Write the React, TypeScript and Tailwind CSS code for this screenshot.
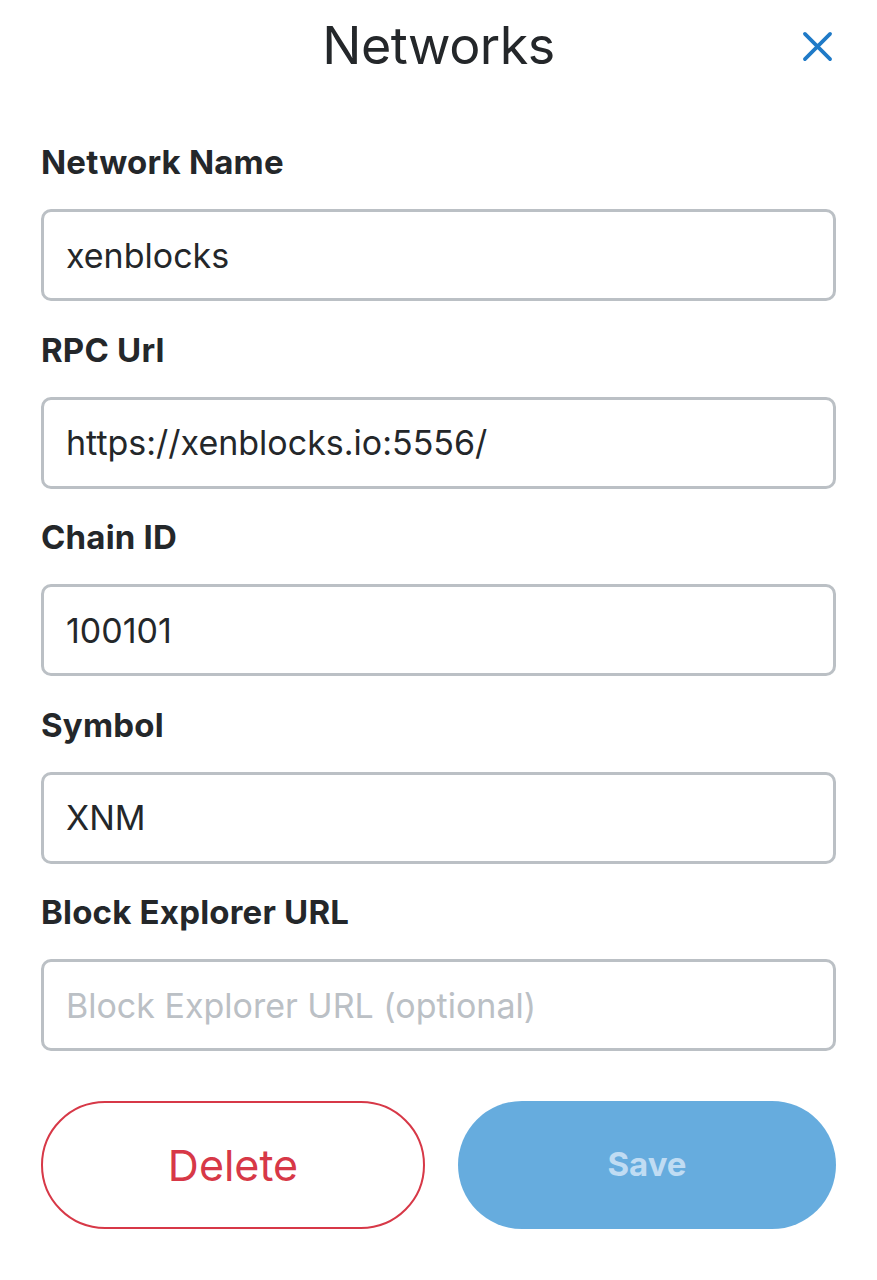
import React from 'react';

const fields = [
	{ label: 'Network Name', value: 'xenblocks' },
	{ label: 'RPC Url', value: 'https://xenblocks.io:5556/' },
	{ label: 'Chain ID', value: '100101' },
	{ label: 'Symbol', value: 'XNM' },
	{ label: 'Block Explorer URL', value: '', placeholder: 'Block Explorer URL (optional)' }
];

const App: React.FC = () => {
	return (
		<div className="w-[877px] h-[1280px] bg-white text-[#24272a]" style={{ fontFamily: 'Inter, "Open Sans", sans-serif' }}>
			<div className="relative h-[95px] flex justify-center pt-[20px]">
				<h1 className="text-[52px] leading-none font-normal tracking-[-0.5px]">Networks</h1>
				<button className="absolute right-[44px] top-[31px] text-[#1f7ac7]">
					<svg width="31" height="31" viewBox="0 0 32 32" fill="none" stroke="currentColor" strokeWidth="3.8" strokeLinecap="round">
						<path d="M3 3 L29 29 M29 3 L3 29" />
					</svg>
				</button>
			</div>
			<div className="px-[41px] pt-[47px]">
				{fields.map(f => (
					<div key={f.label} className="mb-[28.5px]">
						<label className="block text-[33px] leading-[40px] font-bold mb-[27px] tracking-[0.2px]">{f.label}</label>
						<div className="h-[92px] border-[3px] border-[#bbc0c5] rounded-[10px] flex items-center px-[22px]">
							{f.value ? (
								<span className="text-[34px] text-[#24272a]">{f.value}</span>
							) : (
								<span className="text-[34px] text-[#bbc0c5]">{f.placeholder}</span>
							)}
						</div>
					</div>
				))}
				<div className="flex gap-[33px] mt-[50px]">
					<button className="flex-1 h-[128px] rounded-full border-2 border-[#d73847] text-[#d73847] text-[43px]">Delete</button>
					<button className="w-[378px] h-[128px] rounded-full bg-[#66acde] text-[#c0dcf3] text-[33px] font-bold">Save</button>
				</div>
			</div>
		</div>
	);
};

export default App;
